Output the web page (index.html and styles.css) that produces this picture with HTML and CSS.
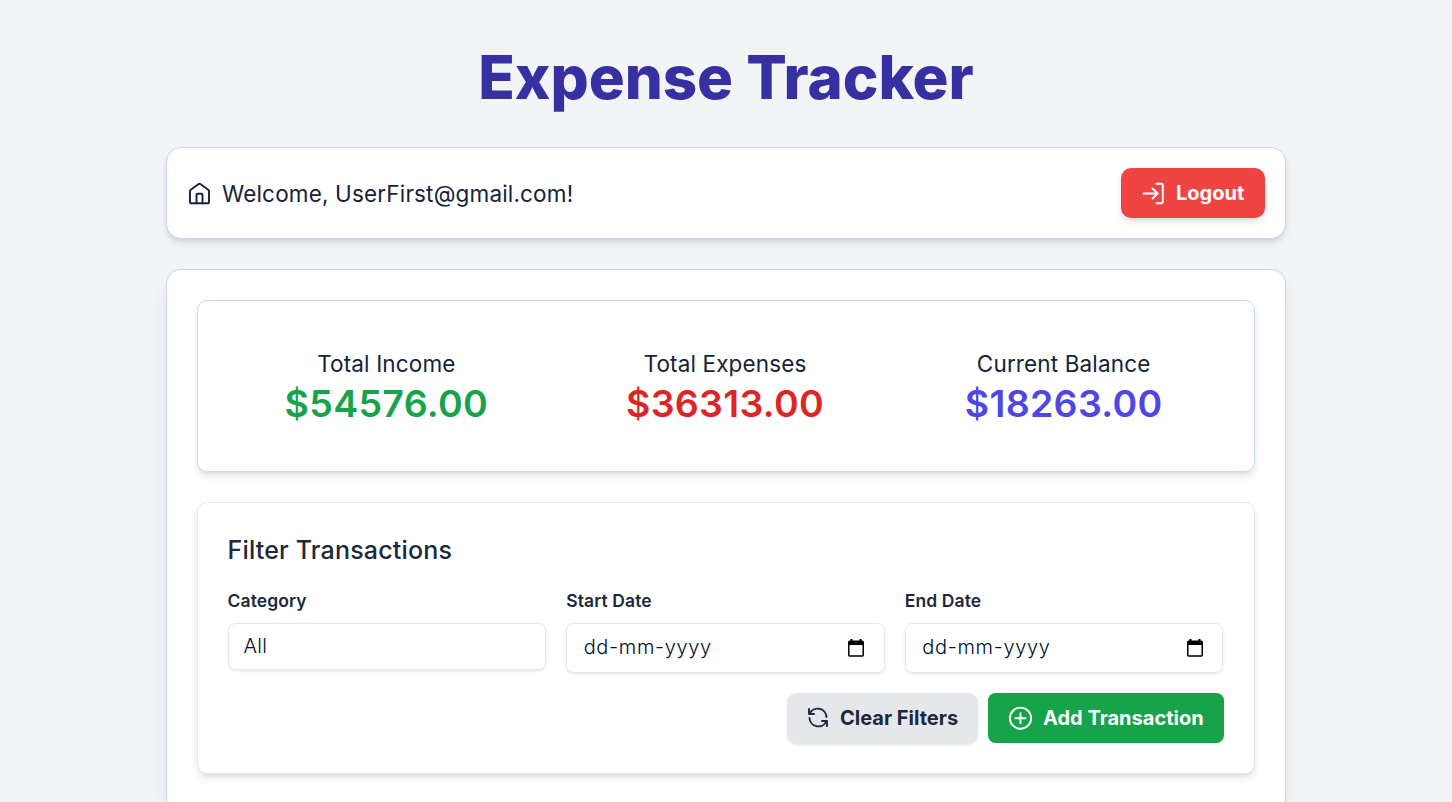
FILE: index.html
```html
<!DOCTYPE html>
<html lang="en">
<head>
<meta charset="utf-8">
<title>Expense Tracker</title>
<link rel="stylesheet" href="styles.css">
</head>
<body>
<div class="page">
  <h1 class="title"><span>Expense Tracker</span></h1>
  <header class="topbar">
    <div class="welcome">
      <svg class="icon-home" viewBox="0 0 25 25"><path d="M3 10.300a2 2 0 0 1 .8-1.600l7.500-5.500a2 2 0 0 1 2.400 0l7.500 5.500a2 2 0 0 1 .8 1.600v11.100a.8.8 0 0 1-.8.800h-17.400a.8.8 0 0 1-.8-.8z"/><path d="M9.500 22.200v-8.500a1 1 0 0 1 1-1h4a1 1 0 0 1 1 1v8.500"/></svg>
      <span>Welcome, UserFirst@gmail.com!</span>
    </div>
    <button class="btn btn-logout">
      <svg class="icon-logout" viewBox="0 0 25 25"><path d="M2.600 12.500h14M11.500 7.500l5.200 5-5.200 5M15.500 2.800h4.800a1.500 1.500 0 0 1 1.500 1.500v16.400a1.500 1.500 0 0 1-1.500 1.500h-4.800"/></svg>
      <span>Logout</span>
    </button>
  </header>
  <main class="panel">
    <section class="summary">
      <div class="stat"><span class="stat-label">Total Income</span><span class="stat-value income">$54576.00</span></div>
      <div class="stat"><span class="stat-label">Total Expenses</span><span class="stat-value expense">$36313.00</span></div>
      <div class="stat"><span class="stat-label">Current Balance</span><span class="stat-value balance">$18263.00</span></div>
    </section>
    <section class="filters">
      <h2 class="filters-title"><span>Filter Transactions</span></h2>
      <div class="fields">
        <div class="field"><span class="label">Category</span><div class="input select">All</div></div>
        <div class="field"><span class="label">Start Date</span>
          <div class="input date"><span>dd-mm-yyyy</span><svg class="icon-cal" viewBox="0 0 16 18"><path fill-rule="evenodd" d="M2.500 0h2v1.500h7V0h2v1.500h.8A1.700 1.700 0 0 1 16 3.200v12.900a1.700 1.700 0 0 1-1.700 1.700H1.700A1.700 1.700 0 0 1 0 16.100V3.200a1.700 1.700 0 0 1 1.700-1.700h.8zM1.500 6v10.300h13V6z"/></svg></div></div>
        <div class="field"><span class="label">End Date</span>
          <div class="input date"><span>dd-mm-yyyy</span><svg class="icon-cal" viewBox="0 0 16 18"><path fill-rule="evenodd" d="M2.500 0h2v1.500h7V0h2v1.500h.8A1.700 1.700 0 0 1 16 3.200v12.900a1.700 1.700 0 0 1-1.700 1.700H1.700A1.700 1.700 0 0 1 0 16.100V3.200a1.700 1.700 0 0 1 1.700-1.700h.8zM1.500 6v10.300h13V6z"/></svg></div></div>
      </div>
      <div class="actions">
        <button class="btn btn-clear">
          <svg class="icon-refresh" viewBox="0 0 22 22"><path d="M2 2v5h5M2.600 7A8.800 8.800 0 0 1 19.500 10M20 19v-5h-5M19.400 14A8.800 8.800 0 0 1 2.500 11"/></svg>
          <span>Clear Filters</span>
        </button>
        <button class="btn btn-add">
          <svg class="icon-plus" viewBox="0 0 25 25"><circle cx="12.500" cy="12.200" r="10.600"/><path d="M12.500 7.200v10M7.500 12.200h10"/></svg>
          <span>Add Transaction</span>
        </button>
      </div>
    </section>
  </main>
</div>
</body>
</html>
```
FILE: styles.css
```css
* { box-sizing: border-box; }
body { margin: 0; height: 802px; overflow: hidden; background: #f3f4f6; color: #1b293b; font-family: Inter, "Liberation Sans", sans-serif; }
svg { fill: none; stroke: currentColor; stroke-width: 1.9; stroke-linecap: round; stroke-linejoin: round; flex: none; }
.page { display: flex; flex-direction: column; width: 1120px; height: 802px; margin: 0 auto; padding-top: 47px; }
.title { margin: 0 0 40px; text-align: center; font-size: 60px; line-height: 60px; font-weight: 800; color: #3730a3; letter-spacing: -0.02px; }
.topbar { display: flex; flex: none; align-items: center; justify-content: space-between; height: 92px; padding: 0 20px; margin-bottom: 30px; background: #fff; border: 1px solid #c7d2fe; border-radius: 15px; box-shadow: 0 5px 8px -1px rgba(0,0,0,.1), 0 2px 5px -2px rgba(0,0,0,.1); }
.welcome { display: flex; align-items: center; gap: 10px; font-size: 22.5px; letter-spacing: .17px; color: #14233a; }
.icon-home { width: 25px; height: 25px; }
.btn { display: flex; align-items: center; height: 50px; border: 0; border-radius: 10px; padding: 0 20px; gap: 10px; font: 700 20px Inter, "Liberation Sans", sans-serif; white-space: nowrap; }
.btn-logout { width: 144px; background: #ef4444; color: #fff; box-shadow: 0 5px 8px -1px rgba(0,0,0,.1), 0 2px 5px -2px rgba(0,0,0,.1); }
.icon-logout, .icon-plus { width: 25px; height: 25px; }
.icon-refresh { width: 22px; height: 22px; }
.panel { flex: 1; min-height: 0; padding: 30px 30px 0; background: #fff; border: 1px solid #c7d2fe; border-bottom: 0; border-radius: 15px 15px 0 0; box-shadow: 0 12px 19px -4px rgba(0,0,0,.1), 0 5px 8px -5px rgba(0,0,0,.1); }
.summary { display: grid; grid-template-columns: repeat(3, 1fr); gap: 20px; height: 172px; padding: 48px 31px 0 29px; margin-bottom: 30px; border: 1px solid #bfdbfe; border-radius: 10px; box-shadow: 0 5px 8px -1px rgba(0,0,0,.1), 0 2px 5px -2px rgba(0,0,0,.1); }
.stat { display: flex; flex-direction: column; align-items: center; }
.stat-label { font-size: 22.5px; line-height: 30px; letter-spacing: .14px; color: #14233a; }
.stat-value { font-size: 37.5px; line-height: 50px; font-weight: 600; letter-spacing: .3px; }
.income { color: #16a34a; }
.expense { color: #dc2626; }
.balance { color: #4f46e5; }
.filters { height: 272px; padding: 30px 30.5px 30px 29.5px; border: 1px solid #e5e7eb; border-radius: 10px; box-shadow: 0 5px 8px -1px rgba(0,0,0,.1), 0 2px 5px -2px rgba(0,0,0,.1); }
.filters-title { margin: 0 0 20px; font-size: 25px; line-height: 35px; font-weight: 500; letter-spacing: .18px; }
.fields { display: grid; grid-template-columns: repeat(3, 1fr); gap: 20px; }
.field { display: flex; flex-direction: column; gap: 10px; }
.label { font-size: 17.5px; line-height: 25px; font-weight: 600; letter-spacing: .1px; }
.input { display: flex; align-items: center; justify-content: space-between; border: 1px solid #e5e7eb; border-radius: 7.5px; box-shadow: 0 1px 3px rgba(0,0,0,.1); font-size: 20px; font-weight: 300; color: #000f24; }
.select { height: 47px; padding: 0 15px 2px; letter-spacing: .3px; }
.date { height: 50px; padding: 0 19.5px 0 16.5px; letter-spacing: .66px; }
.date span { padding-bottom: 2px; }
.icon-cal { width: 16px; height: 18px; fill: #000; stroke: none; }
.actions { display: flex; justify-content: flex-end; gap: 10px; margin: 20px -.5px 0 0; }
.btn-clear { width: 191px; height: 51px; padding-bottom: 1px; gap: 11px; background: #e5e7eb; color: #1b293b; box-shadow: 0 1px 3px rgba(0,0,0,.1); }
.btn-add { width: 236px; border-radius: 7.5px; background: #16a34a; color: #fff; }
```
